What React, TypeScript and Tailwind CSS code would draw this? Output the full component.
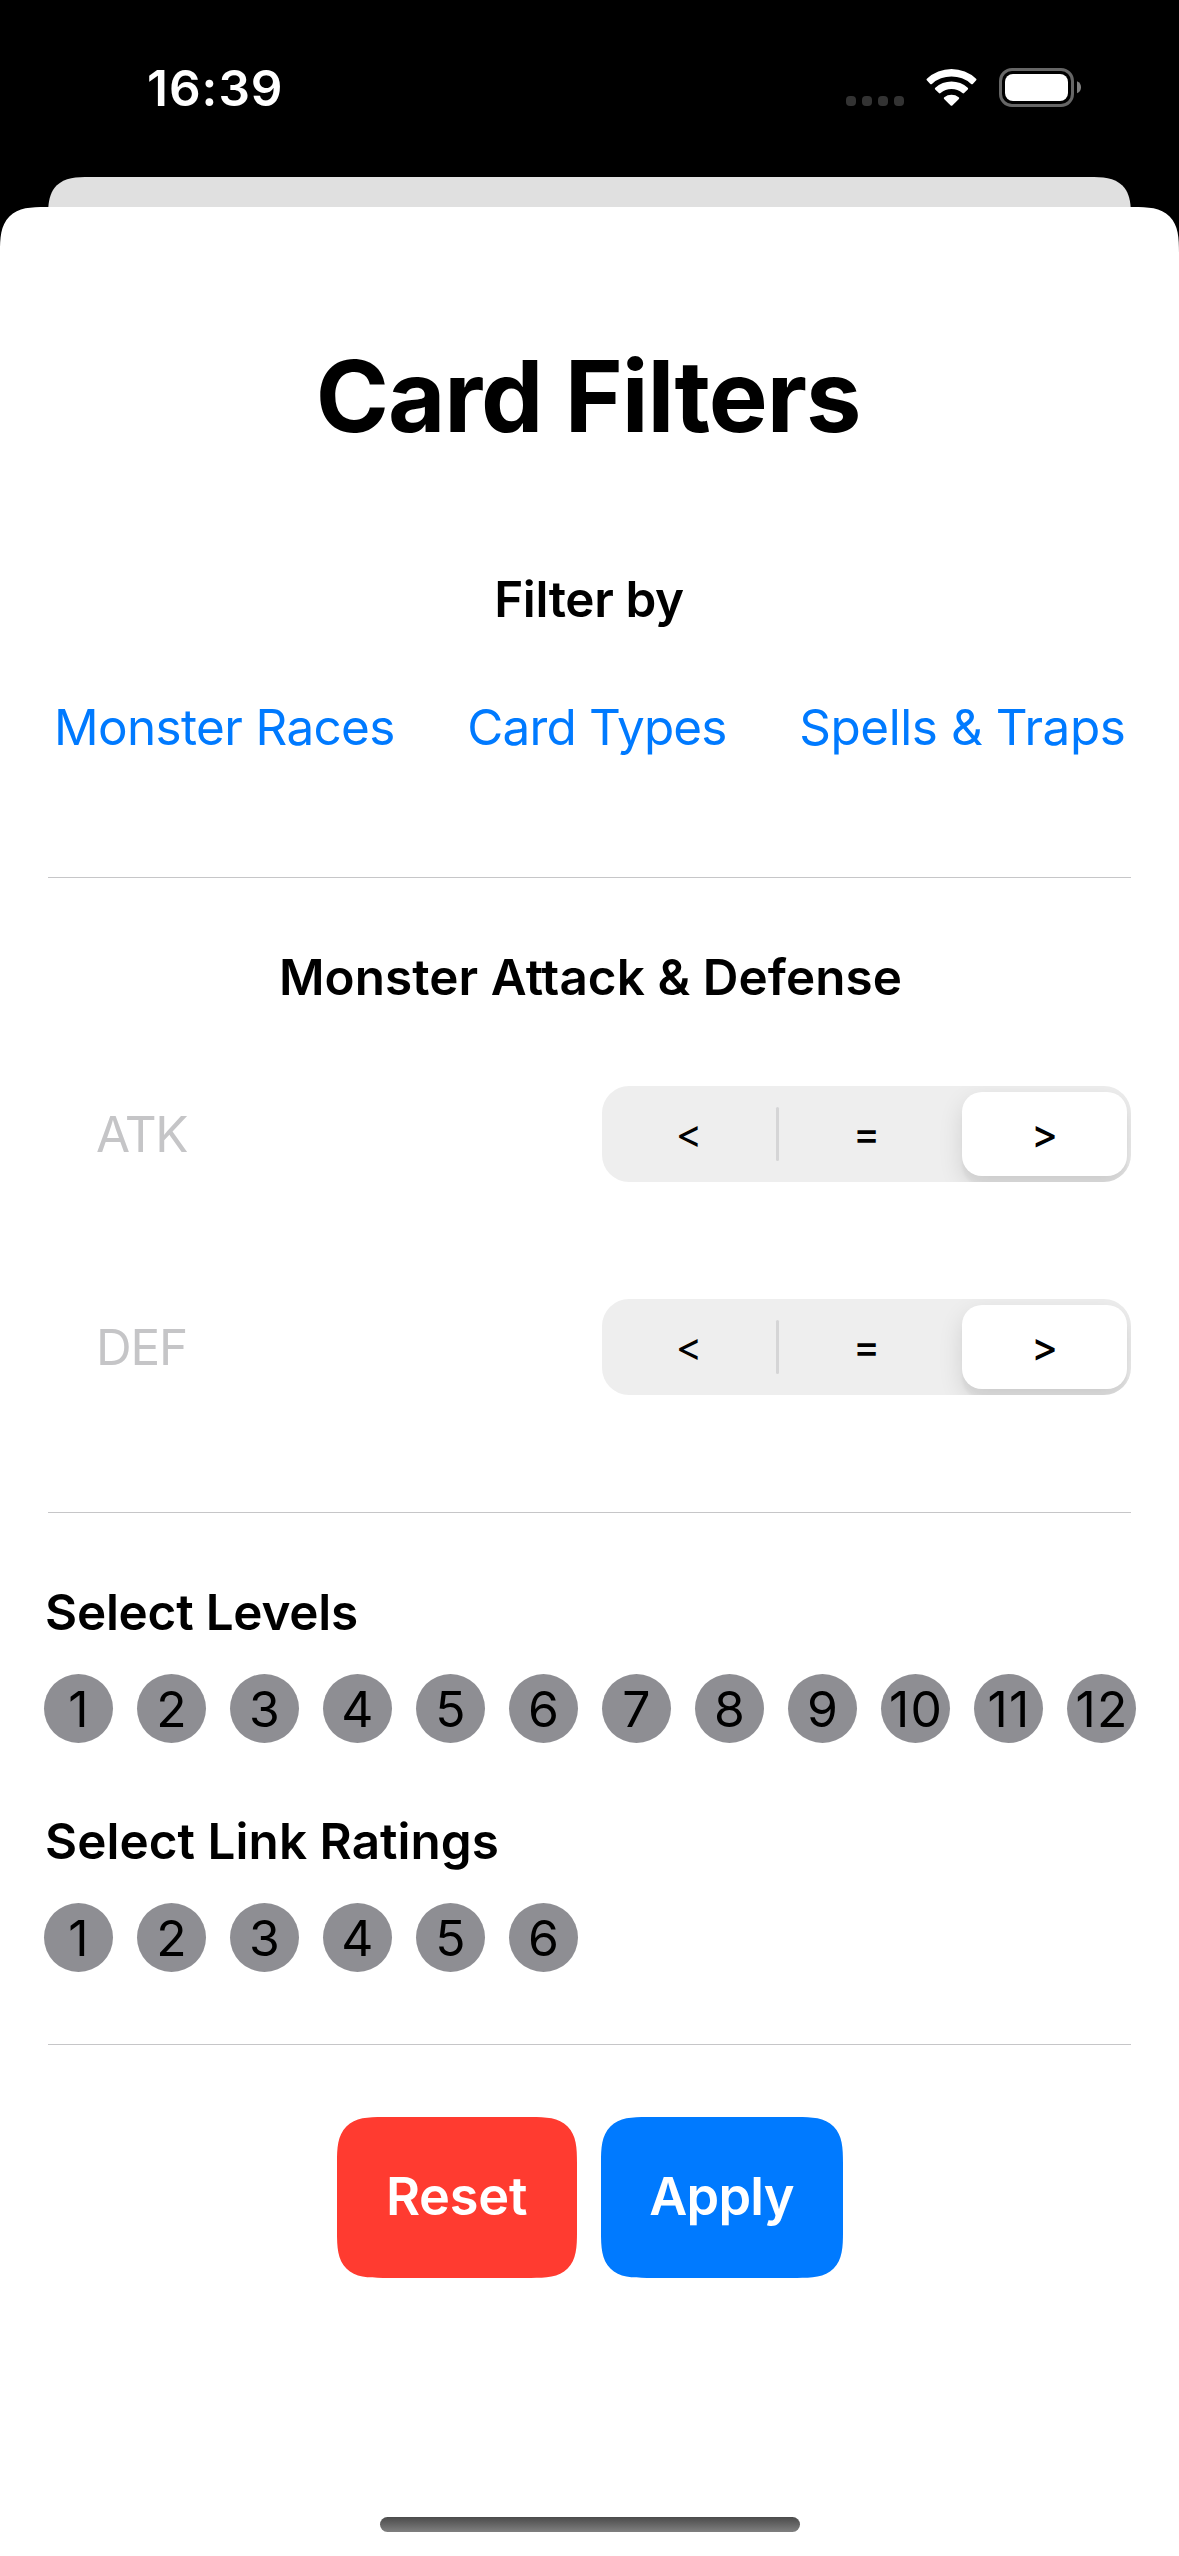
import { useState } from "react";

const levels = [1, 2, 3, 4, 5, 6, 7, 8, 9, 10, 11, 12];
const linkRatings = [1, 2, 3, 4, 5, 6];

function StatusBar() {
  return (
    <header className="flex h-[177px] items-start justify-between pl-[147px] pr-[98px] text-white">
      <span className="mt-[58px] text-[49.5px] font-semibold leading-[60px] tracking-[1px]">16:39</span>
      <div className="mt-[68px] flex h-[39px] items-start">
        <div className="mt-[28px] flex gap-[6px]">
          {[0, 1, 2, 3].map((dot) => (
            <span key={dot} className="size-[10px] rounded-[4px] bg-[#333333]" />
          ))}
        </div>
        <svg className="ml-[22px] h-[39px] w-[51px]" viewBox="0 0 51 39" fill="currentColor" aria-label="Wi-Fi">
          <path d="M0.8 12.2Q0.1 11.4 0.9 10.7A36 36 0 0 1 50.1 10.7Q50.9 11.4 50.2 12.2L46.8 15.9Q46 16.7 45.1 15.9A29.5 29.5 0 0 0 5.9 15.9Q5 16.7 4.2 15.9Z" />
          <path d="M9.2 21.4Q8.4 20.5 9.3 19.7A24 24 0 0 1 41.7 19.7Q42.6 20.5 41.8 21.4L38.1 25.1Q37.3 25.9 36.4 25.1A16.8 16.8 0 0 0 14.6 25.1Q13.7 25.9 12.9 25.1Z" />
          <path d="M18.1 31Q17.3 30.1 18.3 29.3A11.8 11.8 0 0 1 32.7 29.3Q33.7 30.1 32.9 31L26.3 37.5Q25.5 38.2 24.7 37.5Z" />
        </svg>
        <svg className="ml-[22px] h-[39px] w-[82px]" viewBox="0 0 82 39" aria-label="Battery">
          <rect x="1.5" y="1.5" width="72" height="36" rx="11.5" fill="none" stroke="#666666" strokeWidth="3" />
          <rect x="6" y="6" width="63" height="27" rx="8" fill="#ffffff" />
          <path d="M78 13.3Q82 15 82 19.3Q82 23.6 78 25.3Z" fill="#808080" />
        </svg>
      </div>
    </header>
  );
}

function Divider() {
  return <hr className="mx-12 h-px border-0 bg-[#c6c6c8]" />;
}

function CompareRow({ label }: { label: string }) {
  const [selected, setSelected] = useState(">");
  return (
    <div className="flex h-24 items-center justify-between pl-24 pr-12">
      <span className="text-[49.4px] leading-[60px] tracking-[-1.2px] text-[#c5c5c7]">{label}</span>
      <div className="flex h-24 w-[529px] overflow-hidden rounded-[27px] bg-[#eeeeee] py-[6px] pr-1 text-[40px] leading-[50px]">
        <button onClick={() => setSelected("<")} className="flex w-[174px] items-center justify-center font-normal">
          {"<"}
        </button>
        <span className="h-[54px] w-[3px] self-center rounded-full bg-[#d5d5d6]" />
        <button onClick={() => setSelected("=")} className="flex w-[183px] items-center justify-center pr-[8px] font-medium">
          =
        </button>
        <button
          onClick={() => setSelected(">")}
          aria-pressed={selected === ">"}
          className="flex w-[165px] items-center justify-center rounded-[20px] bg-white font-medium shadow-[0_9px_24px_rgba(0,0,0,0.12),0_9px_3px_rgba(0,0,0,0.04)]"
        >
          {">"}
        </button>
      </div>
    </div>
  );
}

function NumberRow({ values }: { values: number[] }) {
  return (
    <div className="mt-8 flex gap-6 pl-11">
      {values.map((value) => (
        <button
          key={value}
          className="flex size-[69px] shrink-0 items-center justify-center rounded-full bg-[#8e8e93] pt-[2px] pl-px text-[49.8px] leading-[61px] tracking-[1.2px] text-black"
        >
          {value}
        </button>
      ))}
    </div>
  );
}

export default function App() {
  return (
    <div className="flex h-[2556px] w-[1179px] flex-col overflow-hidden bg-black font-['Inter',sans-serif] text-black">
      <StatusBar />
      <div className="mx-12 h-[30px] shrink-0 overflow-hidden">
        <div className="h-[120px] rounded-t-[42px] bg-[#e0e0e0] [corner-shape:superellipse(1.6)]" />
      </div>
      <main className="flex grow flex-col rounded-t-[46px] bg-white [corner-shape:superellipse(1.6)]">
        <h1 className="mt-[129px] pr-[3px] text-center text-[99px] font-bold leading-[120px] tracking-[-1.1px]">
          Card Filters
        </h1>

        <h2 className="mt-[113px] pr-px text-center text-[49.4px] font-semibold leading-[60px] tracking-[-0.35px]">
          Filter by
        </h2>
        <nav className="mt-[68px] flex gap-[72.5px] whitespace-nowrap pl-[54px] text-[49.4px] leading-[60px] text-[#007aff]">
          <button className="tracking-[-0.62px]">Monster Races</button>
          <button className="tracking-[-0.8px]">Card Types</button>
          <button className="tracking-[-0.41px]">Spells &amp; Traps</button>
        </nav>
        <div className="mt-[120px]">
          <Divider />
        </div>

        <h2 className="mt-[69px] pl-[2px] text-center text-[49.4px] font-semibold leading-[60px] tracking-[0.09px]">
          Monster Attack &amp; Defense
        </h2>
        <div className="mt-[79px] flex flex-col gap-[117px]">
          <CompareRow label="ATK" />
          <CompareRow label="DEF" />
          <Divider />
        </div>

        <h2 className="mt-[69px] pl-[45px] text-[49.4px] font-semibold leading-[60px] tracking-[-0.21px]">
          Select Levels
        </h2>
        <NumberRow values={levels} />
        <h2 className="mt-[68px] pl-[45px] text-[49.4px] font-semibold leading-[60px] tracking-[0.07px]">
          Select Link Ratings
        </h2>
        <NumberRow values={linkRatings} />
        <div className="mt-[72px]">
          <Divider />
        </div>

        <div className="mt-[72px] flex justify-center gap-6 text-[52.3px] font-semibold leading-[64px] text-white">
          <button className="h-[161px] w-[240px] rounded-[46px] bg-[#ff3b30] pb-[3px] tracking-[-0.26px] [corner-shape:superellipse(1.6)]">
            Reset
          </button>
          <button className="h-[161px] w-[242px] rounded-[46px] bg-[#007aff] pb-[3px] tracking-[-0.75px] [corner-shape:superellipse(1.6)]">
            Apply
          </button>
        </div>

        <div className="mx-auto mb-6 mt-auto h-[15px] w-[420px] rounded-full bg-linear-to-b from-[#4b4b4b] to-[#808080]" />
      </main>
    </div>
  );
}
